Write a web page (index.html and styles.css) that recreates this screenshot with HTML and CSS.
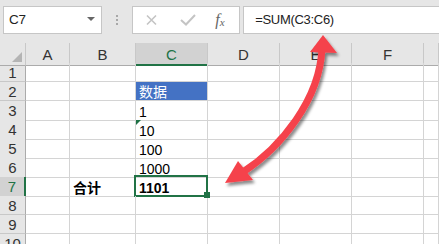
FILE: index.html
```html
<!DOCTYPE html>
<html lang="zh">
<head>
    <meta charset="UTF-8">
    <title>SUM</title>
    <link rel="stylesheet" href="styles.css">
</head>
<body>
    <div class="formula-bar">
        <div class="name-box">
            <span>C7</span>
            <span class="caret"></span>
        </div>
        <div class="grip"><i></i><i></i><i></i></div>
        <div class="fx-buttons">
            <svg class="btn-icon" width="14" height="12" viewBox="0 0 14 12">
                <path d="M2 1.5 L11 10.5 M11 1.5 L2 10.5" stroke="#c4c4c4" stroke-width="1.6" fill="none"/>
            </svg>
            <svg class="btn-icon" width="16" height="12" viewBox="0 0 16 12">
                <path d="M1 6 L6 10.5 L15 1" stroke="#c4c4c4" stroke-width="2" fill="none"/>
            </svg>
            <span class="fx">f<sub>x</sub></span>
        </div>
        <div class="formula-input">=SUM(C3:C6)</div>
    </div>

    <div class="sheet">
        <div class="row head">
            <div class="corner"></div>
            <div class="col-h">A</div>
            <div class="col-h">B</div>
            <div class="col-h active">C</div>
            <div class="col-h">D</div>
            <div class="col-h">E</div>
            <div class="col-h">F</div>
            <div class="col-h"></div>
        </div>
        <div class="row">
            <div class="row-h">1</div>
            <div class="cell"></div><div class="cell"></div><div class="cell"></div>
            <div class="cell"></div><div class="cell"></div><div class="cell"></div><div class="cell"></div>
        </div>
        <div class="row">
            <div class="row-h">2</div>
            <div class="cell"></div><div class="cell"></div><div class="cell title">数据</div>
            <div class="cell"></div><div class="cell"></div><div class="cell"></div><div class="cell"></div>
        </div>
        <div class="row">
            <div class="row-h">3</div>
            <div class="cell"></div><div class="cell"></div><div class="cell">1</div>
            <div class="cell"></div><div class="cell"></div><div class="cell"></div><div class="cell"></div>
        </div>
        <div class="row">
            <div class="row-h">4</div>
            <div class="cell"></div><div class="cell"></div><div class="cell text-num">10</div>
            <div class="cell"></div><div class="cell"></div><div class="cell"></div><div class="cell"></div>
        </div>
        <div class="row">
            <div class="row-h">5</div>
            <div class="cell"></div><div class="cell"></div><div class="cell">100</div>
            <div class="cell"></div><div class="cell"></div><div class="cell"></div><div class="cell"></div>
        </div>
        <div class="row">
            <div class="row-h">6</div>
            <div class="cell"></div><div class="cell"></div><div class="cell">1000</div>
            <div class="cell"></div><div class="cell"></div><div class="cell"></div><div class="cell"></div>
        </div>
        <div class="row">
            <div class="row-h active">7</div>
            <div class="cell"></div><div class="cell bold">合计</div><div class="cell bold selected">1101</div>
            <div class="cell"></div><div class="cell"></div><div class="cell"></div><div class="cell"></div>
        </div>
        <div class="row">
            <div class="row-h">8</div>
            <div class="cell"></div><div class="cell"></div><div class="cell"></div>
            <div class="cell"></div><div class="cell"></div><div class="cell"></div><div class="cell"></div>
        </div>
        <div class="row">
            <div class="row-h">9</div>
            <div class="cell"></div><div class="cell"></div><div class="cell"></div>
            <div class="cell"></div><div class="cell"></div><div class="cell"></div><div class="cell"></div>
        </div>
        <div class="row">
            <div class="row-h">10</div>
            <div class="cell"></div><div class="cell"></div><div class="cell"></div>
            <div class="cell"></div><div class="cell"></div><div class="cell"></div><div class="cell"></div>
        </div>
    </div>

    <!-- callout arrow drawn over the sheet -->
    <svg class="arrow" width="439" height="244" viewBox="0 0 439 244">
        <defs>
            <filter id="shadow" x="-20%" y="-20%" width="140%" height="140%">
                <feDropShadow dx="2" dy="3" stdDeviation="1.8" flood-color="#000" flood-opacity="0.45"/>
            </filter>
        </defs>
        <g filter="url(#shadow)" fill="#f5434b">
            <path d="M322 48 C320 100, 280 148, 243 172" stroke="#f5434b" stroke-width="7" fill="none"/>
            <polygon points="323,35 310,52 337,53"/>
            <polygon points="225,183 238,161 253,180"/>
        </g>
    </svg>
</body>
</html>
```

FILE: styles.css
```css
* {
    margin: 0;
    padding: 0;
    box-sizing: border-box;
}

body {
    position: relative;
    width: 439px;
    height: 244px;
    overflow: hidden;
    background: white;
    font-family: 'Liberation Sans', 'Noto Sans CJK SC', sans-serif;
    color: #000;
}

/* Formula bar */
.formula-bar {
    height: 43px;
    background: #e6e6e6;
    display: flex;
    align-items: flex-start;
    padding: 6px 0 0 3px;
}

.name-box {
    width: 101px;
    height: 28px;
    background: white;
    border: 1px solid #c6c6c6;
    display: flex;
    align-items: center;
    justify-content: space-between;
    padding: 0 6px 1px 5px;
    font-size: 13.5px;
    letter-spacing: -0.3px;
    color: #222;
}

.caret {
    width: 0;
    height: 0;
    border-left: 4px solid transparent;
    border-right: 4px solid transparent;
    border-top: 4px solid #666;
    margin-bottom: 2px;
}

.grip {
    width: 31px;
    height: 28px;
    display: flex;
    flex-direction: column;
    align-items: center;
    justify-content: center;
    gap: 2px;
}

.grip i {
    width: 2px;
    height: 2px;
    background: #a8a8a8;
}

.fx-buttons {
    width: 110px;
    height: 28px;
    background: white;
    border: 1px solid #c6c6c6;
    display: flex;
    align-items: center;
    padding-left: 12px;
}

.btn-icon {
    margin-right: 21px;
}

.fx {
    font-family: 'Liberation Serif', serif;
    font-style: italic;
    font-size: 16px;
    color: #666;
    margin-left: -2px;
}

.fx sub {
    font-size: 11px;
    vertical-align: -1px;
}

.formula-input {
    margin-left: 3px;
    width: 200px;
    height: 28px;
    background: white;
    border: 1px solid #c6c6c6;
    border-right: none;
    padding: 5px 0 0 11px;
    font-size: 13px;
    letter-spacing: -0.3px;
    color: #222;
}

/* Sheet grid */
.row {
    display: grid;
    grid-template-columns: 26px 44px 66px 72px 72px 72px 72px 1fr;
    height: 19px;
}

.row.head {
    height: 20px;
}

.corner,
.col-h {
    background: #e6e6e6;
    border-right: 1px solid #c8c8c8;
    border-bottom: 1px solid #ababab;
    text-align: center;
    font-size: 15px;
    line-height: 19px;
    padding-top: 2px;
    color: #333;
}

.corner {
    position: relative;
}

.corner::after {
    content: "";
    position: absolute;
    right: 3px;
    bottom: 3px;
    border-left: 10px solid transparent;
    border-bottom: 10px solid #b4b4b4;
}

.col-h.active {
    background: #d2d2d2;
    border-bottom: 2px solid #217346;
    color: #217346;
}

.row-h {
    background: #e6e6e6;
    border-right: 1px solid #ababab;
    border-bottom: 1px solid #c8c8c8;
    text-align: center;
    font-size: 15px;
    line-height: 16px;
    padding-top: 2px;
    color: #333;
}

.row-h.active {
    background: #d2d2d2;
    border-right: 2px solid #217346;
    color: #217346;
}

.cell {
    position: relative;
    border-right: 1px solid #d4d4d4;
    border-bottom: 1px solid #d4d4d4;
    font-size: 14px;
    line-height: 16px;
    padding: 3px 0 0 3px;
    white-space: nowrap;
}

.cell.title {
    background: #4472c4;
    color: white;
    padding-top: 2px;
}

.cell.bold {
    font-weight: bold;
}

.cell.text-num::before {
    content: "";
    position: absolute;
    left: 0;
    top: 0;
    border-top: 5px solid #1e7145;
    border-right: 5px solid transparent;
}

.cell.selected::after {
    content: "";
    position: absolute;
    left: -2px;
    top: -2px;
    right: -1px;
    bottom: -1px;
    border: 2px solid #217346;
}

.cell.selected::before {
    content: "";
    position: absolute;
    right: -3px;
    bottom: -2px;
    width: 6px;
    height: 6px;
    background: #217346;
    z-index: 1;
}

.arrow {
    position: absolute;
    left: 0;
    top: 0;
    pointer-events: none;
}
```
